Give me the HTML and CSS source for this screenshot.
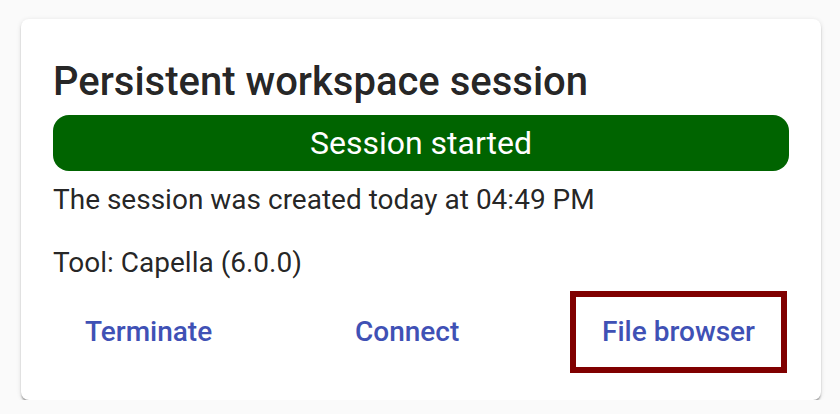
FILE: index.html
```html
<!DOCTYPE html>
<html>
<head>
<meta charset="utf-8">
<link rel="stylesheet" href="styles.css">
</head>
<body>
<div class="card">
  <h1 class="title">Persistent workspace session</h1>
  <div class="status">Session started</div>
  <p class="line first">The session was created today at 04:49 PM</p>
  <p class="line second">Tool: Capella (6.0.0)</p>
  <div class="actions">
    <button class="btn">Terminate</button>
    <button class="btn">Connect</button>
    <button class="btn highlighted">File browser</button>
  </div>
</div>
</body>
</html>
```
FILE: styles.css
```css
html, body {
  margin: 0;
  padding: 0;
  background: #fafafa;
  font-family: Roboto, "Noto Sans", sans-serif;
}
.card {
  box-sizing: border-box;
  width: 800px;
  margin: 19px 0 0 21px;
  padding: 39px 32px 27px 32px;
  background: #fff;
  border-radius: 8px;
  box-shadow: 0 3px 2px -1px rgba(0,0,0,.25), 0 2px 2px 0 rgba(0,0,0,.14), 0 1px 5px 0 rgba(0,0,0,.12);
  color: rgba(0,0,0,.87);
}
.title {
  margin: 0 0 9px 0;
  font-size: 40px;
  line-height: 48px;
  font-weight: 500;
}
.status {
  height: 56px;
  line-height: 56px;
  background: #006400;
  color: #fff;
  border-radius: 16px;
  text-align: center;
  font-size: 32px;
}
.line {
  margin: 0;
  font-size: 28px;
  line-height: 40px;
}
.first { margin-top: 9px; }
.second { margin-top: 23px; }
.actions {
  display: flex;
  justify-content: space-between;
  margin: 8px 2px 0 0;
}
.btn {
  box-sizing: border-box;
  height: 82px;
  padding: 0 26px;
  border: 6px solid transparent;
  background: transparent;
  font-family: Roboto, "Noto Sans", sans-serif;
  font-size: 28px;
  font-weight: 500;
  color: #3f51b5;
  line-height: 70px;
}
.highlighted {
  border-color: #800000;
}
```
